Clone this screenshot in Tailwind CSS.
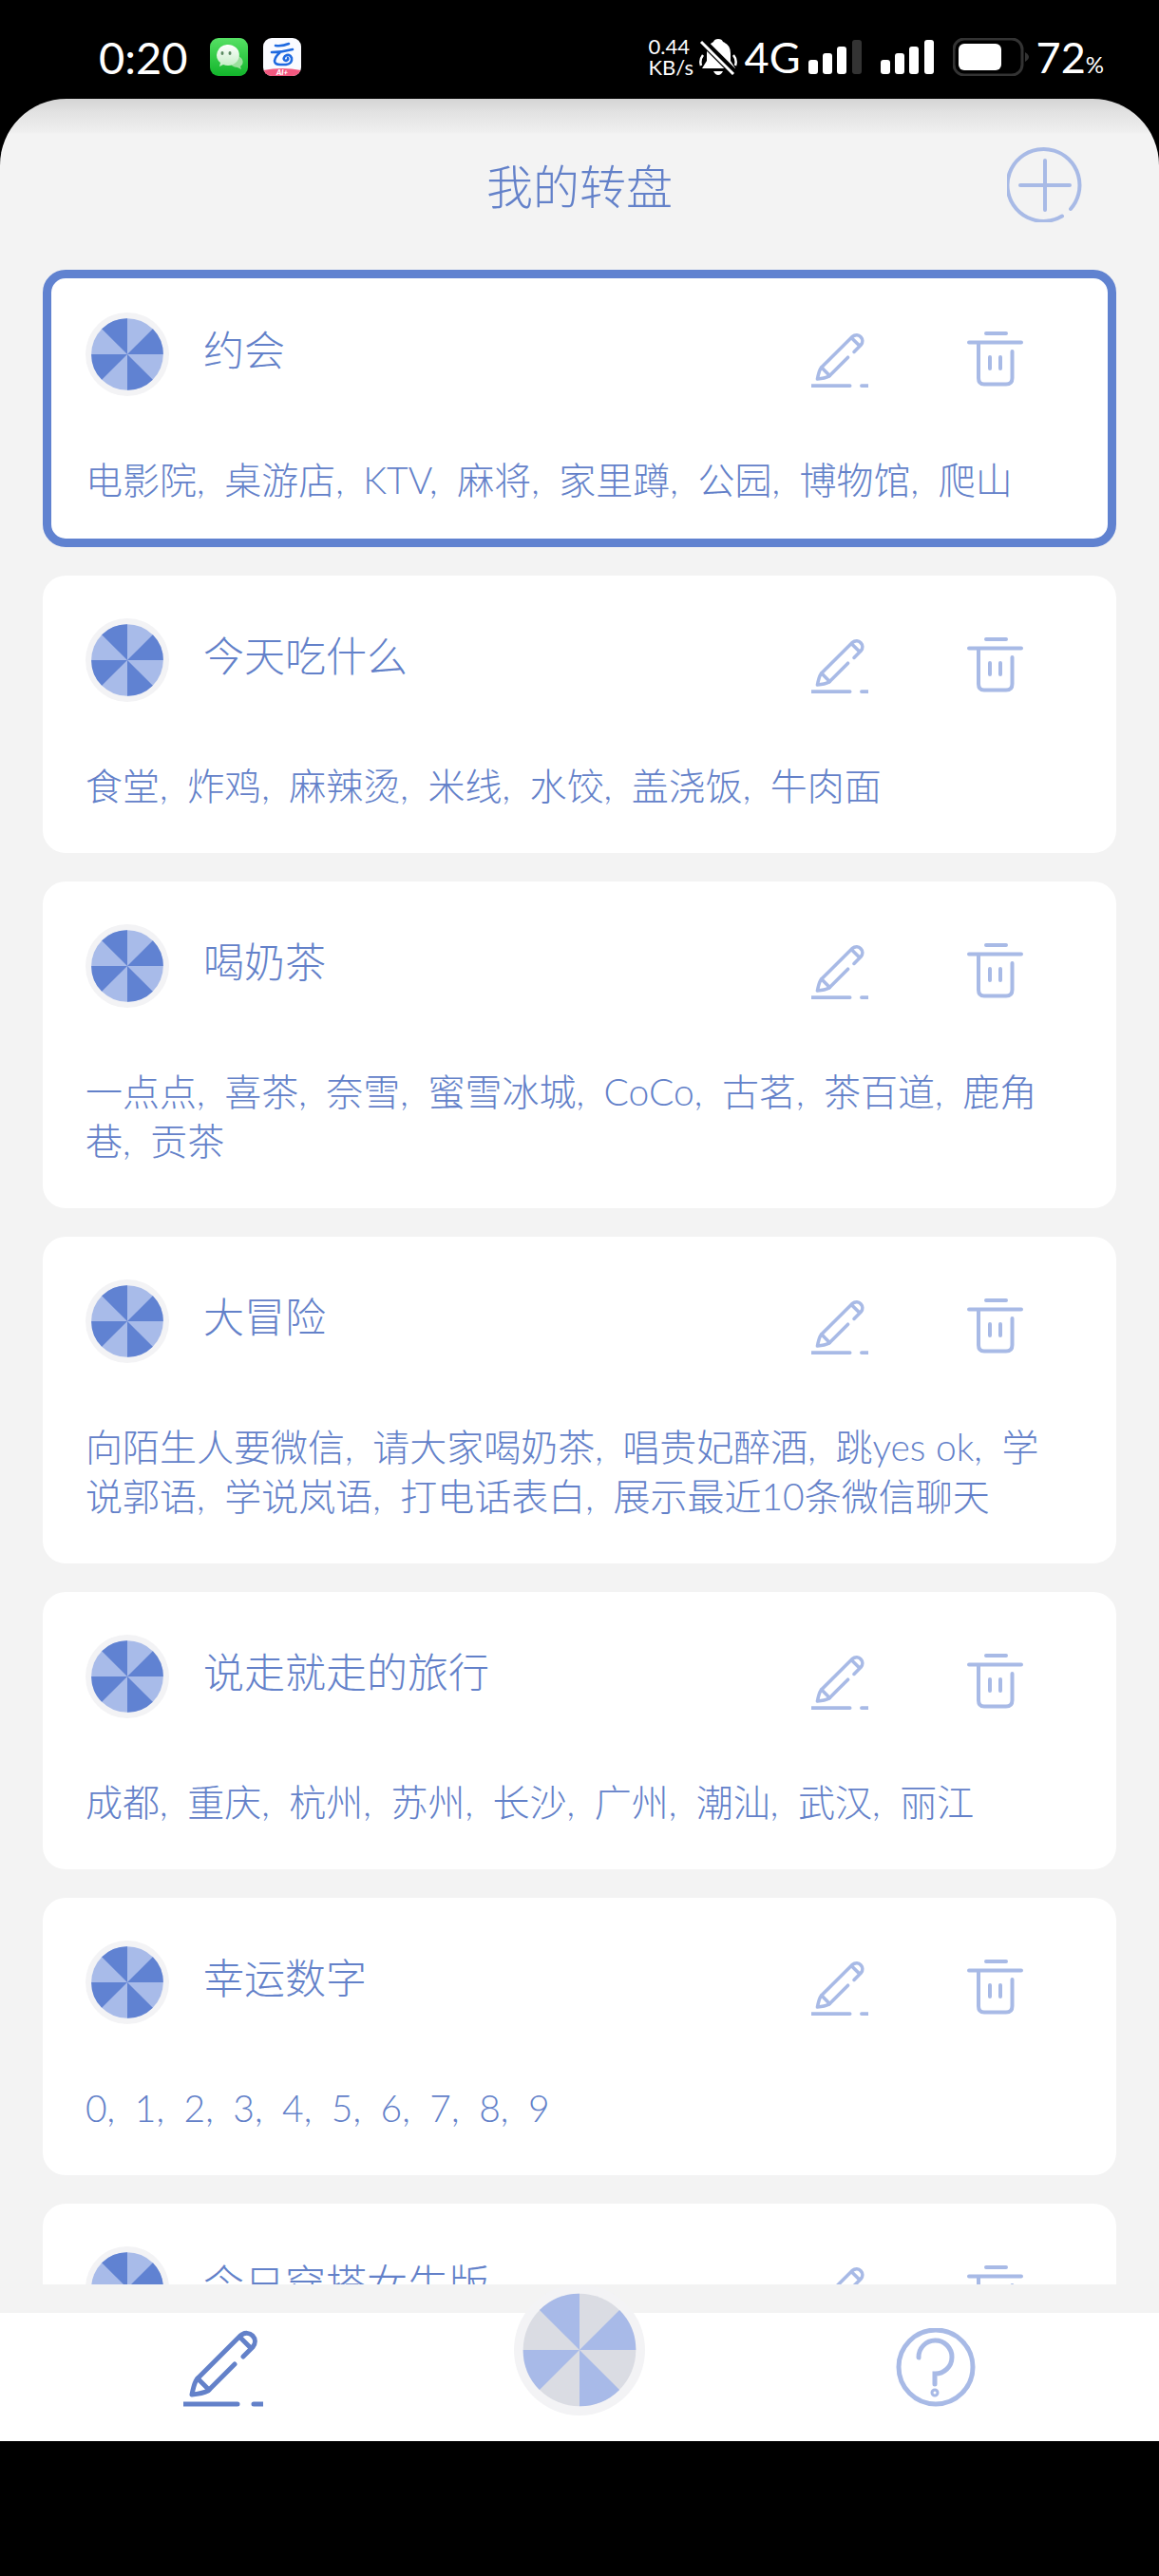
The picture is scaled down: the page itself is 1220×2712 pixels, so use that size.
<!DOCTYPE html>
<html lang="zh-CN">
<head>
    <meta charset="UTF-8"/>
    <meta name="viewport" content="width=device-width, initial-scale=1.0"/>
    <title>我的转盘</title>
    <script src="https://cdn.jsdelivr.net/npm/@tailwindcss/browser@4"></script>
</head>
<body class="h-screen flex flex-col overflow-hidden bg-black font-['Lato','Noto_Sans_CJK_SC',sans-serif]">

<svg class="hidden">
    <symbol id="wheel" viewBox="-100 -100 200 200">
        <circle r="100" fill="#f3f3f5"/>
        <circle r="86"/>
        <g fill="currentColor">
            <path d="M0 0L61 -61A86 86 0 0 1 86 0Z"/>
            <path d="M0 0L61 61A86 86 0 0 1 0 86Z"/>
            <path d="M0 0L-61 61A86 86 0 0 1 -86 0Z"/>
            <path d="M0 0L-61 -61A86 86 0 0 1 0 -86Z"/>
        </g>
    </symbol>
    <symbol id="pencil" viewBox="0 0 84 84">
        <g fill="none" stroke="currentColor" stroke-width="5" stroke-linecap="round" stroke-linejoin="round">
            <path d="M63 30L73 20C80 12 70 0 60 8L15 53L13 56Q11 60 9 70Q20 69 26 66L54 38"/>
            <path d="M15 53L27 65M60 10L71 21"/>
            <path d="M0 80H57M74 80H84"/>
        </g>
    </symbol>
    <symbol id="trash" viewBox="0 0 60 60">
        <g fill="none" stroke="currentColor" stroke-width="4" stroke-linecap="round">
            <path d="M20 2H41M2 11.500H57M12 12V49Q12 55.500 18 55.500H41Q47.500 55.500 47.500 49V21M24 27V39M35 27V39"/>
        </g>
    </symbol>
</svg>

<div class="h-[104px] shrink-0 flex items-center justify-between pl-[104px] pr-[58px] pt-4 text-white">
    <div class="flex items-center gap-4">
        <span class="w-[101px] text-[47px] leading-[48px]">0:20</span>
        <svg class="size-10" viewBox="0 0 40 40">
            <defs>
                <linearGradient id="chatGreen" x2="0" y2="1">
                    <stop stop-color="#56e064"/>
                    <stop offset="1" stop-color="#12b52b"/>
                </linearGradient>
                <linearGradient id="bubble" x2="0" y2="1">
                    <stop stop-color="#fff"/>
                    <stop offset="1" stop-color="#c5edc6"/>
                </linearGradient>
            </defs>
            <rect width="40" height="40" rx="9" fill="url(#chatGreen)"/>
            <path d="M29 19a8 6.500 0 0 1 3 11l1 3-4-2a8 6 0 1 1 0-12z" fill="#9be09d"/>
            <path d="M18 7a12 11 0 1 1-4 21l-4 2 1-4A12 11 0 0 1 18 7z" fill="url(#bubble)"/>
            <ellipse cx="13" cy="16" rx="1.500" ry="2" fill="#5c8a62"/>
            <ellipse cx="21" cy="16" rx="1.500" ry="2" fill="#5c8a62"/>
        </svg>
        <svg class="size-10" viewBox="0 0 40 40">
            <defs><clipPath id="tile"><rect width="40" height="40" rx="9"/></clipPath></defs>
            <g clip-path="url(#tile)">
                <rect width="40" height="40" fill="#fafbff"/>
                <path d="M0 34Q20 30 40 34V40H0Z" fill="#f2587f"/>
                <g fill="none" stroke="#1f6ae0" stroke-width="2.600" stroke-linecap="round">
                    <path d="M13 8Q20 9 27 6M9 15Q20 15 31 12M18 15Q13 19 12 24Q12 28 18 28H24Q31 27 30 21Q28 16 23 19Q20 23 24 24Q27 23 26 21"/>
                </g>
            </g>
            <text x="20" y="39" text-anchor="middle" font-size="8" font-weight="900" font-style="italic" fill="#fff">AI+</text>
        </svg>
    </div>

    <div class="flex items-center">
        <div class="w-[53px] text-[22px] leading-[22px]">0.44<br/>KB/s</div>
        <svg class="w-10 h-[38px] mr-2" viewBox="0 0 40 38">
            <path d="M20 0q4 0 5 3q8 3 8 12v8l5 8H3l5-8V15Q8 6 15 3Q16 0 20 0zM15 34h10q-2 4-5 4t-5-4z" fill="#fff"/>
            <path d="M4 17Q0 22 2 28M36 17Q40 22 38 28" fill="none" stroke="#fff" stroke-width="2.500"/>
            <path d="M2 1L39 38" stroke="#000" stroke-width="8"/>
            <path d="M2 3L36 37" stroke="#fff" stroke-width="3"/>
        </svg>
        <span class="w-[67px] text-[45px] leading-[48px]">4G</span>
        <svg class="w-14 h-9 mr-5" viewBox="0 0 56 36" fill="#fff">
            <rect y="21" width="10" height="15" rx="3"/>
            <rect x="15" y="14" width="10" height="22" rx="3"/>
            <rect x="30" y="7" width="10" height="29" rx="3"/>
            <rect x="46" width="10" height="36" rx="3" fill="#333"/>
        </svg>
        <svg class="w-14 h-9 mr-5" viewBox="0 0 56 36" fill="#fff">
            <rect y="21" width="10" height="15" rx="3"/>
            <rect x="15" y="14" width="10" height="22" rx="3"/>
            <rect x="30" y="7" width="10" height="29" rx="3"/>
            <rect x="46" width="10" height="36" rx="3"/>
        </svg>
        <svg class="w-20 h-10 mr-2" viewBox="0 0 80 40">
            <rect x="1" y="1" width="72" height="38" rx="11" fill="none" stroke="#333" stroke-width="3"/>
            <rect x="6" y="6" width="45" height="28" rx="6" fill="#fff"/>
            <path d="M76 15q8 5 0 10z" fill="#333"/>
        </svg>
        <div class="flex items-baseline leading-[48px]"><span class="text-[45px]">72</span><span class="text-2xl">%</span></div>
    </div>
</div>

<div class="flex-1 min-h-0 flex flex-col rounded-t-[70px] bg-[#f3f3f3] bg-[linear-gradient(#d4d4d4,#e2e2e2_14px,#efefef_35px,#f3f3f3_37px)] bg-no-repeat text-[#6381c9] font-light">
    <header class="h-[180px] shrink-0 grid grid-cols-[1fr_auto_1fr] items-center px-20 pt-1">
        <h1 class="col-start-2 text-[49px] leading-[72px]">我的转盘</h1>
        <button type="button" aria-label="新建转盘" class="justify-self-end size-20 mb-1 text-[#a8bae6]">
            <svg viewBox="0 0 80 80" fill="none" stroke="currentColor" stroke-width="4" stroke-linecap="round">
                <path d="M67 66A38 38 0 1 0 58 73.500"/>
                <path d="M40 15V67M14 41H66"/>
            </svg>
        </button>
    </header>

    <main class="flex-1 min-h-0 overflow-hidden px-[45px]">
        <ul id="wheelList" class="space-y-[30px]"></ul>
    </main>

    <nav class="relative h-[135px] mt-[30px] shrink-0 grid grid-cols-3 justify-items-center px-12 bg-white">
        <button type="button" aria-label="编辑" class="mt-4 size-[84px] text-[#6381c9]"><svg class="size-full"><use href="#pencil"/></svg></button>
        <button type="button" aria-label="转盘" class="-mt-[30px] size-[138px] fill-[#dadce3] text-[#a8bae8]"><svg class="size-full"><use href="#wheel"/></svg></button>
        <button type="button" aria-label="帮助" class="mt-4 size-[84px] text-[#a8bae6]">
            <svg viewBox="0 0 84 84" fill="none" stroke="currentColor" stroke-width="5" stroke-linecap="round">
                <circle cx="42" cy="41" r="39"/>
                <path d="M24 31A17.500 17.500 0 1 1 41 48V59"/>
                <circle cx="41" cy="68" r="3" stroke-width="3"/>
            </svg>
        </button>
    </nav>
</div>
<div class="h-[142px] shrink-0"></div>

<script>
    const wheels = [
        {name: '约会', items: ['电影院', '桌游店', 'KTV', '麻将', '家里蹲', '公园', '博物馆', '爬山']},
        {name: '今天吃什么', items: ['食堂', '炸鸡', '麻辣烫', '米线', '水饺', '盖浇饭', '牛肉面']},
        {name: '喝奶茶', items: ['一点点', '喜茶', '奈雪', '蜜雪冰城', 'CoCo', '古茗', '茶百道', '鹿角巷', '贡茶']},
        {name: '大冒险', items: ['向陌生人要微信', '请大家喝奶茶', '唱贵妃醉酒', '跳yes ok', '学说郭语', '学说岚语', '打电话表白', '展示最近10条微信聊天']},
        {name: '说走就走的旅行', items: ['成都', '重庆', '杭州', '苏州', '长沙', '广州', '潮汕', '武汉', '丽江']},
        {name: '幸运数字', items: ['0', '1', '2', '3', '4', '5', '6', '7', '8', '9']},
        {name: '今日穿搭女生版', items: ['连衣裙', '半身裙', '牛仔裤']},
    ];
    const selected = 0;

    const list = document.getElementById('wheelList');

    wheels.forEach((wheel, idx) => {
        const li = document.createElement('li');
        li.className = 'rounded-3xl border-[9px] bg-white pt-9 pb-9 pl-9 pr-12 ' + (idx === selected ? 'border-[#6082d0]' : 'border-white');
        const items = wheel.items
            .map((item, i) => i < wheel.items.length - 1 ? `<span class="mr-[10px]">${item},</span>` : `<span>${item}</span>`)
            .join(' ');
        li.innerHTML = `
            <div class="flex items-start h-[88px] pr-10">
                <svg class="size-[88px] mr-9 shrink-0 fill-[#a8bbe9] text-[#6082d2]"><use href="#wheel"/></svg>
                <h2 class="flex-1 text-[43px] leading-[80px]">${wheel.name}</h2>
                <div class="flex gap-[104px] mt-5 text-[#a8bae6]">
                    <button type="button" aria-label="编辑${wheel.name}" class="size-15"><svg class="size-full"><use href="#pencil"/></svg></button>
                    <button type="button" aria-label="删除${wheel.name}" class="size-15"><svg class="size-full"><use href="#trash"/></svg></button>
                </div>
            </div>
            <p class="mt-[62px] text-[39px] leading-[52px]">${items}</p>`;
        list.appendChild(li);
    });
</script>

</body>
</html>
